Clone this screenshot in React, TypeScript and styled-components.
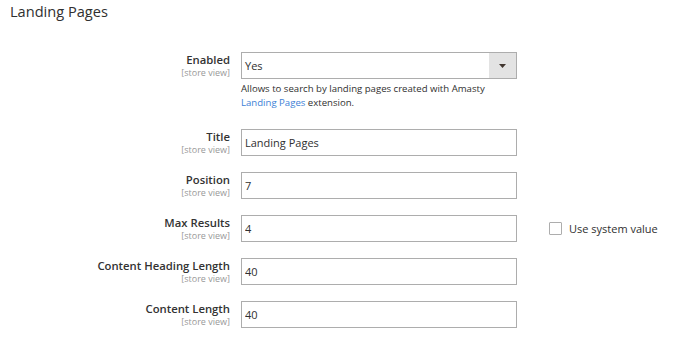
import styled, { createGlobalStyle } from "styled-components";

interface Field {
    id: string;
    label: string;
    value: string;
    select?: boolean;
    systemValue?: boolean;
}

const fields: Field[] = [
    { id: "enabled", label: "Enabled", value: "Yes", select: true },
    { id: "title", label: "Title", value: "Landing Pages" },
    { id: "position", label: "Position", value: "7" },
    { id: "max_results", label: "Max Results", value: "4", systemValue: true },
    { id: "heading_length", label: "Content Heading Length", value: "40" },
    { id: "content_length", label: "Content Length", value: "40" },
];

function App() {
    return (
        <>
            <GlobalStyle />
            <Section>
                <SectionTitle>Landing Pages</SectionTitle>
                <Form>
                    {fields.map((field) => (
                        <Row key={field.id}>
                            <Label htmlFor={field.id}>
                                <LabelText>{field.label}</LabelText>
                                <Scope>[store view]</Scope>
                            </Label>
                            <Control>
                                {field.select ? (
                                    <SelectBox>
                                        <SelectValue>{field.value}</SelectValue>
                                        <SelectArrow>
                                            <svg width="7" height="4" viewBox="0 0 7 4">
                                                <path d="M0 0h7L3.5 4z" fill="#41362f" />
                                            </svg>
                                        </SelectArrow>
                                    </SelectBox>
                                ) : (
                                    <TextInput id={field.id} type="text" defaultValue={field.value} />
                                )}
                                {field.select && (
                                    <Note>
                                        Allows to search by landing pages created with Amasty{" "}
                                        <NoteLink href="#">Landing Pages</NoteLink> extension.
                                    </Note>
                                )}
                            </Control>
                            <Extra>
                                {field.systemValue && (
                                    <CheckLabel>
                                        <CheckBox type="checkbox" />
                                        Use system value
                                    </CheckLabel>
                                )}
                            </Extra>
                        </Row>
                    ))}
                </Form>
            </Section>
        </>
    );
}

export default App;

const GlobalStyle = createGlobalStyle`
    body {
        margin: 0;
        background: #fff;
        font-family: "Open Sans", "Liberation Sans", sans-serif;
        color: #303030;
    }
`

const Section = styled.div`
    width: 686px;
    height: 339px;
    overflow: hidden;
`

const SectionTitle = styled.h2`
    margin: 0;
    padding: 1px 0 0 10px;
    font-size: 14.6px;
    font-weight: 400;
    line-height: 20px;
    color: #303030;
`

const Form = styled.div`
    display: flex;
    flex-direction: column;
    gap: 16px;
    padding-top: 31px;
`

const Row = styled.div`
    display: grid;
    grid-template-columns: 230px 276px 1fr;
    column-gap: 11px;
    align-items: start;
`

const Label = styled.label`
    display: flex;
    flex-direction: column;
    align-items: flex-end;
    padding-top: 0;
`

const LabelText = styled.span`
    font-size: 11.3px;
    font-weight: 600;
    line-height: 15px;
    color: #333;
`

const Scope = styled.span`
    font-size: 9px;
    line-height: 11px;
    color: #999;
`

const Control = styled.div`
    display: flex;
    flex-direction: column;
`

const TextInput = styled.input`
    box-sizing: border-box;
    width: 276px;
    height: 27px;
    margin: 0;
    padding: 0 3px;
    border: 1px solid #adadad;
    border-radius: 0;
    outline: none;
    font-family: "Open Sans", "Liberation Sans", sans-serif;
    font-size: 11px;
    color: #303030;
    background: #fff;
`

const SelectBox = styled.div`
    box-sizing: border-box;
    display: flex;
    width: 276px;
    height: 27px;
    border: 1px solid #adadad;
    background: #fff;
`

const SelectValue = styled.div`
    flex: 1;
    display: flex;
    align-items: center;
    padding-left: 3px;
    font-size: 11px;
`

const SelectArrow = styled.div`
    width: 27px;
    display: flex;
    align-items: center;
    justify-content: center;
    background: #e3e3e3;
`

const Note = styled.div`
    margin: 3px 0 3px;
    font-size: 9.6px;
    line-height: 14px;
    color: #303030;
`

const NoteLink = styled.a`
    color: #3d7fd6;
    text-decoration: none;
`

const Extra = styled.div`
    display: flex;
    align-items: center;
    height: 27px;
    padding-left: 21px;
`

const CheckLabel = styled.label`
    display: flex;
    align-items: center;
    gap: 7px;
    font-size: 11px;
    color: #303030;
`

const CheckBox = styled.input`
    appearance: none;
    box-sizing: border-box;
    width: 13px;
    height: 13px;
    margin: 0;
    border: 1px solid #adadad;
    border-radius: 1px;
    background: #fff;
`
